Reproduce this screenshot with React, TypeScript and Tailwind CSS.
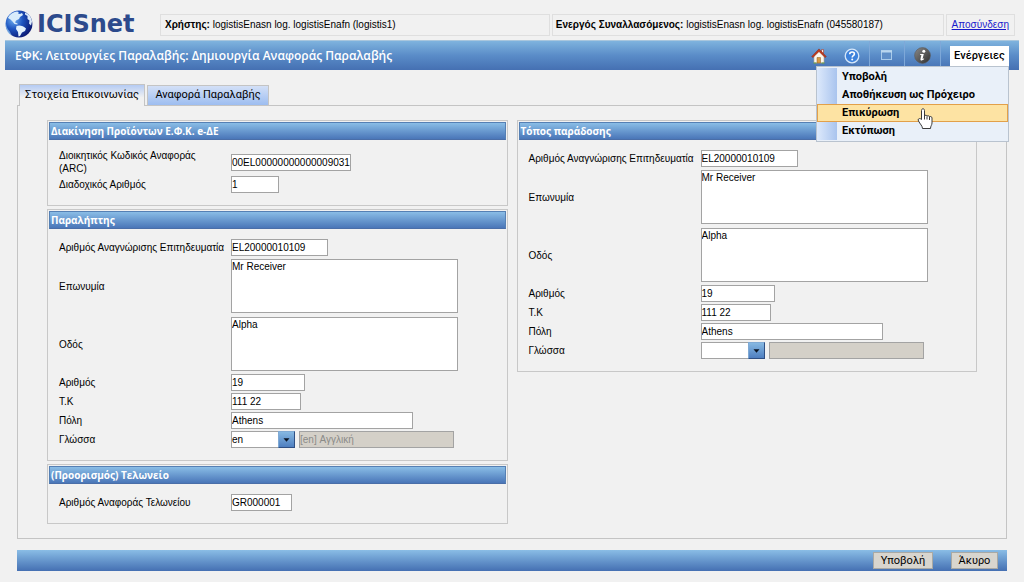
import type { ReactNode } from "react";

const bar = "bg-linear-to-b from-[#8abde6] to-[#4a76b8]";
const field = "h-[17px] border border-[#a3a3a3] bg-white px-0 text-[10px] leading-none text-black";

function Panel({ title, children }: { title: string; children: ReactNode }) {
  return (
    <section className="border border-[#c8c8c8] p-px">
      <h2 className={`${bar} h-[18px] border border-[#5580b4] border-b-[#4a6ea8] px-px font-['Open_Sans',sans-serif] text-[10px] leading-4 font-bold text-white`}>
        {title}
      </h2>
      <div className="px-[10px] pt-[9px] pb-[10px]">{children}</div>
    </section>
  );
}

function Row({ id, label, area, children }: { id: string; label: string; area?: boolean; children: ReactNode }) {
  return (
    <div className={`flex items-center ${area ? "h-[58px]" : "min-h-[19px]"}`}>
      <label htmlFor={id} className="w-[172px] shrink-0 leading-[13px] whitespace-pre">
        {label}
      </label>
      {children}
    </div>
  );
}

function Text({ id, value, width }: { id: string; value: string; width: string }) {
  return <input id={id} type="text" defaultValue={value} className={`${field} ${width}`} />;
}

function Area({ id, value }: { id: string; value: string }) {
  return (
    <textarea
      id={id}
      defaultValue={value}
      className="h-[54px] w-[227px] resize-none border border-[#a3a3a3] bg-white px-0 py-0 text-[10px] leading-[13px] text-black"
    />
  );
}

function Trader({ prefix, lang, langName }: { prefix: string; lang: string; langName: string }) {
  return (
    <>
      <Row id={`${prefix}-id`} label="Αριθμός Αναγνώρισης Επιτηδευματία">
        <Text id={`${prefix}-id`} value="EL20000010109" width="w-[97px]" />
      </Row>
      <Row id={`${prefix}-name`} label="Επωνυμία" area>
        <Area id={`${prefix}-name`} value="Mr Receiver" />
      </Row>
      <Row id={`${prefix}-street`} label="Οδός" area>
        <Area id={`${prefix}-street`} value="Alpha" />
      </Row>
      <Row id={`${prefix}-number`} label="Αριθμός">
        <Text id={`${prefix}-number`} value="19" width="w-[74px]" />
      </Row>
      <Row id={`${prefix}-zip`} label="Τ.Κ">
        <Text id={`${prefix}-zip`} value="111 22" width="w-[70px]" />
      </Row>
      <Row id={`${prefix}-city`} label="Πόλη">
        <Text id={`${prefix}-city`} value="Athens" width="w-[182px]" />
      </Row>
      <Row id={`${prefix}-lang`} label="Γλώσσα">
        <div className="relative mr-1">
          <select id={`${prefix}-lang`} defaultValue={lang} className={`${field} block w-16 appearance-none`}>
            <option value=""></option>
            <option value="en">en</option>
          </select>
          <span className="pointer-events-none absolute inset-y-0 right-0 flex w-[17px] items-center justify-center border border-t-[#7fa9d4] border-r-[#2f4f83] border-b-[#2f4f83] border-l-[#7fa9d4] bg-linear-to-b from-[#86b8e2] to-[#4f7fc0]">
            <svg width="7" height="4" viewBox="0 0 7 4">
              <path d="M0.500 0.300h6L3.500 3.700z" fill="#0b1524" />
            </svg>
          </span>
        </div>
        <input
          type="text"
          disabled
          aria-label="Περιγραφή γλώσσας"
          defaultValue={langName}
          className="h-[17px] w-[155px] border border-[#a3a3a3] bg-[#d4d0c8] px-0 text-[10px] leading-none text-[#8b8b88]"
        />
      </Row>
    </>
  );
}

function Globe() {
  return (
    <svg width="30" height="30" viewBox="0 0 30 30" className="shrink-0">
      <defs>
        <radialGradient id="sea" cx="0.3" cy="0.35" r="0.75">
          <stop offset="0" stopColor="#6fb0f0" />
          <stop offset="0.45" stopColor="#1f55c0" />
          <stop offset="1" stopColor="#0a1670" />
        </radialGradient>
      </defs>
      <circle cx="14" cy="15" r="13.400" fill="url(#sea)" />
      <path d="M3 9c1-3 5-6 9-6.500 2 0 2 1 1 2l2 0.500 2-1 1 2-3 2-1 2-3 1.500-1 2 2.500 1 0 1-3-0.500-2-2.500-2-2z" fill="#d9ecfb" />
      <path d="M11.500 17c3-1.500 7 0 9.500 2.500l-1 2.500-3 1.500-2 3.500-1.500 0.500-0.500-4.500-2-3z" fill="#e4f2fd" />
      <path d="M20 3.500c4 1.500 6.500 5 7 9l-1 4-2-2 0.500-3-2-1.500 0-3-2.500-1.500z" fill="#dcebfa" />
      <path d="M0.800 13c0.500 5 2 7 4 9.500l2 4C3 25 0 20 0.800 13z" fill="#8cc0f0" opacity="0.700" />
    </svg>
  );
}

function HomeIcon() {
  return (
    <svg width="16" height="16" viewBox="0 0 16 16">
      <path d="M10.500 1.500h2V5h-2z" fill="#f2e6e0" stroke="#a4382a" strokeWidth="0.600" />
      <path d="M3 8v7h10V8L8 3z" fill="#fbf7ee" stroke="#b9a98d" strokeWidth="0.600" />
      <path d="M0.700 8.600L8 0.900l7.300 7.700-1.200 1L8 3.600l-6.100 6z" fill="#c23a1c" stroke="#8a2412" strokeWidth="0.500" />
      <path d="M6 9.500h3.500V15H6z" fill="#d89a43" stroke="#8c5a20" strokeWidth="0.500" />
      <path d="M2.500 14.500h3v1h-3zM10.500 14.500h3v1h-3z" fill="#5e9a3a" />
    </svg>
  );
}

function HelpIcon() {
  return (
    <svg width="16" height="16" viewBox="0 0 16 16">
      <circle cx="8" cy="8" r="6.800" fill="#3f83dc" stroke="#d7e8fa" strokeWidth="1.300" />
      <path d="M5.700 6.300c0-1.500 1-2.300 2.400-2.300s2.300 0.800 2.300 2c0 1.700-2.200 1.700-2.200 3.400" fill="none" stroke="#fff" strokeWidth="1.600" />
      <circle cx="8.200" cy="11.500" r="1" fill="#fff" />
    </svg>
  );
}

function WindowIcon() {
  return (
    <svg width="12" height="11" viewBox="0 0 12 11">
      <rect x="0.500" y="0.500" width="10" height="9" fill="#5f8fc8" stroke="#a9cbea" />
      <path d="M0 1.500h11" stroke="#b9d6ef" strokeWidth="2" />
    </svg>
  );
}

function InfoIcon() {
  return (
    <svg width="17" height="17" viewBox="0 0 17 17">
      <defs>
        <linearGradient id="dark" x1="0" y1="0" x2="1" y2="1">
          <stop offset="0" stopColor="#8b8b8b" />
          <stop offset="1" stopColor="#2d2d2d" />
        </linearGradient>
      </defs>
      <circle cx="8.500" cy="8.500" r="7.900" fill="url(#dark)" stroke="#5a5a5a" strokeWidth="0.600" />
      <circle cx="9.800" cy="4.300" r="1.500" fill="#fff" />
      <path d="M6.300 7h3.500L8.500 12l1.700-0.700-0.400 1.300c-1.500 1.200-3.700 1.200-3.300-0.700L7.400 8H6z" fill="#fff" />
    </svg>
  );
}

function HandCursor() {
  return (
    <svg width="16" height="22" viewBox="0 0 16 22">
      <path
        d="M4.500 11.500V2.500c0-2.300 3-2.300 3 0V8c0.500-1.200 2.500-1 2.500 0.300 0.500-1 2.500-0.700 2.500 0.700 0.800-1 2.500-0.400 2.500 1V15c0 2-1.500 3-1.500 5.500h-8C5.500 18 3 16 1.500 13 0.300 11 2.500 9.500 4.500 11.500z"
        fill="#fff"
        stroke="#3a3a3a"
      />
      <path d="M7.500 8v3.500M10 8.500v3M12.500 9v3" stroke="#3a3a3a" />
    </svg>
  );
}

const actions = ["Υποβολή", "Αποθήκευση ως Πρόχειρο", "Επικύρωση", "Εκτύπωση"];

export default function App() {
  return (
    <div className="min-h-screen bg-[#f1f1f1] pb-3 font-['Liberation_Sans',sans-serif] text-[10px] text-black">
      <header className="flex h-10 items-center pr-[9px] pl-[5px]">
        <div className="flex w-[155px] shrink-0 items-center gap-0.5 pt-2">
          <Globe />
          <span className="font-['DejaVu_Sans',sans-serif] text-2xl leading-[34px] font-bold text-[#2c4a8c]">ICISnet</span>
        </div>
        <div className="flex flex-1 gap-0.5 pt-[9px] leading-[20px] whitespace-nowrap">
          <p className="flex-[389] border border-[#dfdfdf] px-1">
            <b>Χρήστης:</b> logistisEnasn log. logistisEnafn (logistis1)
          </p>
          <p className="flex-[393] border border-[#dfdfdf] px-[3px]">
            <b>Ενεργός Συναλλασόμενος:</b> logistisEnasn log. logistisEnafn (045580187)
          </p>
          <p className="border border-[#dfdfdf] px-[5px]">
            <a href="#logout" className="text-[#1a1acc] underline">
              Αποσύνδεση
            </a>
          </p>
        </div>
      </header>

      <div className="mr-[5px] ml-[5px] flex h-[30px] items-center justify-between border-t border-[#a9c6dd] bg-linear-to-b from-[#7fb3de] via-[#5a8cc8] via-50% to-[#4570b2] pr-2.5 pl-2.5">
        <h1 className="font-['Open_Sans',sans-serif] text-xs font-semibold text-white">
          ΕΦΚ: Λειτουργίες Παραλαβής: Δημιουργία Αναφοράς Παραλαβής
        </h1>
        <div className="flex h-full items-center">
          <button type="button" aria-label="Αρχική" className="flex w-[33px] justify-center"><HomeIcon /></button>
          <button type="button" aria-label="Βοήθεια" className="flex h-full w-[35px] items-center justify-center border-r border-[#7ea8d8]"><HelpIcon /></button>
          <button type="button" aria-label="Παράθυρο" className="flex h-full w-[35px] items-center justify-center border-r border-[#7ea8d8]"><WindowIcon /></button>
          <button type="button" aria-label="Πληροφορίες" className="flex h-full w-9 items-center justify-center border-r border-[#7ea8d8]"><InfoIcon /></button>
          <div className="relative ml-[9px] font-['Roboto',sans-serif] font-bold">
            <button type="button" className="block h-5 w-[59px] bg-white text-[11px] leading-5 font-medium">Ενέργειες</button>
            <ul className="absolute top-full right-0 z-10 w-[193px] border border-[#b9c3cf] bg-[#e9f0f9] py-px">
              {actions.map((name, i) => (
                <li key={name} className="relative bg-linear-to-r from-[#dde9fb] to-[#a9c4ee] bg-[length:20px_100%] bg-no-repeat">
                  <button
                    type="button"
                    className={`block h-[18px] w-full border pl-6 text-left text-[11px] leading-4 ${i === 2 ? "border-[#e2a04a] bg-[#fde3a3]" : "border-transparent"}`}
                  >
                    {name}
                  </button>
                  {i === 2 && <span className="pointer-events-none absolute top-1 left-[100px] z-10"><HandCursor /></span>}
                </li>
              ))}
            </ul>
          </div>
        </div>
      </div>

      <main className="mx-[17px] mt-[14px]">
        <div role="tablist" className="relative z-0 flex items-end gap-0.5 pl-0.5 font-['Roboto',sans-serif] text-[11px]">
          <button type="button" role="tab" aria-selected="true" className="-mb-px h-[22px] w-[126px] border border-b-0 border-[#c4c4c4] bg-linear-to-b from-[#b5cbf3] to-[#f1f1f1] to-60%">
            Στοιχεία Επικοινωνίας
          </button>
          <button type="button" role="tab" aria-selected="false" className="h-5 w-[122px] border border-b-0 border-[#c4c4c4] bg-linear-to-b from-[#d3e0f7] to-[#9dbdf0]">
            Αναφορά Παραλαβής
          </button>
        </div>
        <div className="grid grid-cols-2 items-start gap-[9px] border border-[#c4c4c4] px-[29px] pt-[14px] pb-[14px]">
          <div className="flex flex-col gap-[3px]">
            <Panel title="Διακίνηση Προϊόντων Ε.Φ.Κ. e-ΔΕ">
              <Row id="arc" label={"Διοικητικός Κωδικός Αναφοράς\n(ARC)"}>
                <Text id="arc" value="00EL00000000000009031" width="w-[120px]" />
              </Row>
              <Row id="seq" label="Διαδοχικός Αριθμός">
                <Text id="seq" value="1" width="w-12" />
              </Row>
            </Panel>
            <Panel title="Παραλήπτης">
              <Trader prefix="consignee" lang="en" langName="[en] Αγγλική" />
            </Panel>
            <Panel title="(Προορισμός) Τελωνείο">
              <Row id="office" label="Αριθμός Αναφοράς Τελωνείου">
                <Text id="office" value="GR000001" width="w-[61px]" />
              </Row>
            </Panel>
          </div>
          <Panel title="Τόπος παράδοσης">
            <Trader prefix="delivery" lang="" langName="" />
          </Panel>
        </div>
      </main>

      <footer className="mx-[17px] mt-[11px] flex h-[21px] items-center justify-end gap-[18px] bg-linear-to-b from-[#8abde6] to-[#4570b2] pr-[9px] font-['Roboto',sans-serif] text-[11px]">
        <button type="button" className="h-[17px] w-[60px] border border-[#a9a9a4] bg-[#d8d5ce] leading-[14px]">Υποβολή</button>
        <button type="button" className="h-[17px] w-[47px] border border-[#a9a9a4] bg-[#d8d5ce] leading-[14px]">Άκυρο</button>
      </footer>
    </div>
  );
}
